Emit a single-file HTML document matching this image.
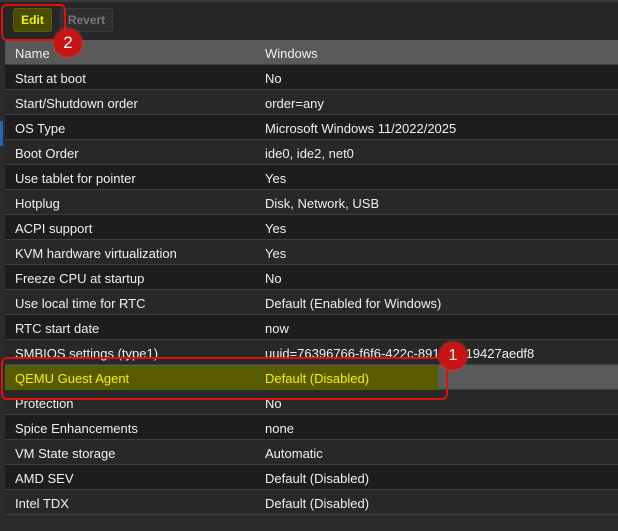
<!DOCTYPE html>
<html><head><meta charset="utf-8"><style>
*{margin:0;padding:0;box-sizing:border-box}
body{width:618px;height:531px;background:#2b2b2b;font-family:"Liberation Sans",Arial,sans-serif;font-size:13px;color:#f0f0f0;position:relative;overflow:hidden}
.tb{position:absolute;left:0;top:0;width:618px;height:40px;background:#262626;border-top:2px solid #3a3a3a}
.btn{position:absolute;top:8px;height:24px;border-radius:3px;font-size:12px;font-weight:bold;line-height:22px;text-align:center}
.row{position:absolute;left:5px;width:613px;height:25px;border-bottom:1px solid #3f3f3f}
.row span{position:absolute;top:6px}
.row .a{left:10px}.row .b{left:260px}
.o{background:#1d1d1d}.e{background:#282828}
</style></head><body>
<div style="position:absolute;left:0;top:0;width:5px;height:531px;background:#2b2b2b"></div>
<div style="position:absolute;left:0;top:121px;width:3px;height:25px;background:#1e6ab0"></div>
<div class="tb"></div>
<div class="btn" style="left:13px;width:39px;background:#4b4b00;border:1px solid #5e5e10;color:#f4f400">Edit</div>
<div class="btn" style="left:60px;width:53px;background:#2f2f2f;border:1px solid #3a3a3a;color:#777">Revert</div>

<div class="row" style="top:40px;background:#595959"><span class="a">Name</span><span class="b">Windows</span></div>
<div class="row o" style="top:65px"><span class="a">Start at boot</span><span class="b">No</span></div>
<div class="row e" style="top:90px"><span class="a">Start/Shutdown order</span><span class="b">order=any</span></div>
<div class="row o" style="top:115px"><span class="a">OS Type</span><span class="b">Microsoft Windows 11/2022/2025</span></div>
<div class="row e" style="top:140px"><span class="a">Boot Order</span><span class="b">ide0, ide2, net0</span></div>
<div class="row o" style="top:165px"><span class="a">Use tablet for pointer</span><span class="b">Yes</span></div>
<div class="row e" style="top:190px"><span class="a">Hotplug</span><span class="b">Disk, Network, USB</span></div>
<div class="row o" style="top:215px"><span class="a">ACPI support</span><span class="b">Yes</span></div>
<div class="row e" style="top:240px"><span class="a">KVM hardware virtualization</span><span class="b">Yes</span></div>
<div class="row o" style="top:265px"><span class="a">Freeze CPU at startup</span><span class="b">No</span></div>
<div class="row e" style="top:290px"><span class="a">Use local time for RTC</span><span class="b">Default (Enabled for Windows)</span></div>
<div class="row o" style="top:315px"><span class="a">RTC start date</span><span class="b">now</span></div>
<div class="row e" style="top:340px"><span class="a">SMBIOS settings (type1)</span><span class="b">uuid=76396766-f6f6-422c-891d-5b19427aedf8</span></div>
<div class="row" style="top:365px;background:#5a5a5a"></div>
<div style="position:absolute;left:5px;top:366px;width:252px;height:24px;background:#5a5a00;border:1px solid #2e6e10"></div>
<div style="position:absolute;left:257px;top:366px;width:181px;height:24px;background:#5a5a00"></div>
<div style="position:absolute;left:15px;top:371px;color:#f4f400">QEMU Guest Agent</div>
<div style="position:absolute;left:265px;top:371px;color:#f4f400">Default (Disabled)</div>
<div class="row e" style="top:390px"><span class="a">Protection</span><span class="b">No</span></div>
<div class="row o" style="top:415px"><span class="a">Spice Enhancements</span><span class="b">none</span></div>
<div class="row e" style="top:440px"><span class="a">VM State storage</span><span class="b">Automatic</span></div>
<div class="row o" style="top:465px"><span class="a">AMD SEV</span><span class="b">Default (Disabled)</span></div>
<div class="row e" style="top:490px"><span class="a">Intel TDX</span><span class="b">Default (Disabled)</span></div>

<div style="position:absolute;left:1px;top:4px;width:65px;height:37px;border:2px solid #e01010;border-radius:6px"></div>
<div style="position:absolute;left:1px;top:357px;width:447px;height:43px;border:2px solid #e01010;border-radius:6px"></div>
<div style="position:absolute;left:54px;top:29px;width:28px;height:28px;border-radius:50%;background:#c81414;box-shadow:0 0 3px #f33;color:#fff;font-size:17px;text-align:center;line-height:28px">2</div>
<div style="position:absolute;left:439px;top:342px;width:28px;height:28px;border-radius:50%;background:#c81414;box-shadow:0 0 3px #f33;color:#fff;font-size:16px;text-align:center;line-height:28px">1</div>
</body></html>
